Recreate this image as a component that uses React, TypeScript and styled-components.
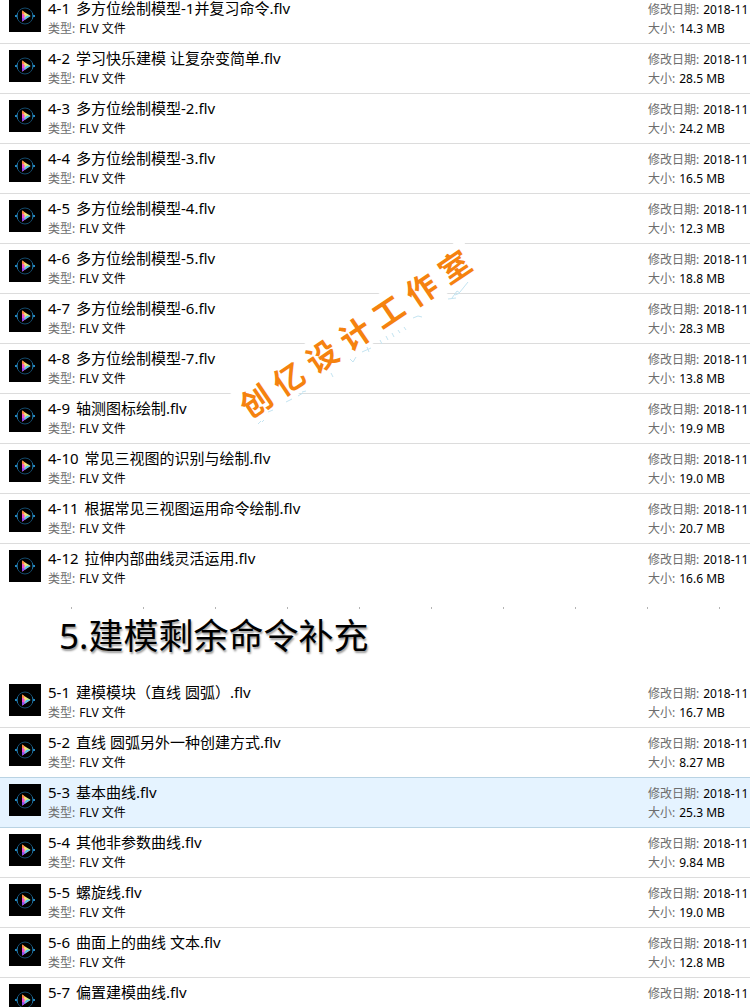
import React from "react";
import styled, { createGlobalStyle } from "styled-components";

const GlobalStyle = createGlobalStyle`
  * { box-sizing: border-box; }
  body {
    margin: 0;
    background: #ffffff;
    color: #000000;
    font-family: "Noto Sans", "Noto Sans CJK SC", sans-serif;
  }
`;

const Page = styled.main`
  position: relative;
  height: 100vh;
  overflow: hidden;
`;

const FileList = styled.ul<{ $scrolled?: boolean }>`
  margin: ${(p) => (p.$scrolled ? "-6px" : "0")} 0 0;
  padding: 0;
  list-style: none;
`;

const FileRow = styled.li<{ $selected?: boolean }>`
  display: flex;
  height: 50px;
  padding: 6px 0 0 9px;
  border-bottom: 1px solid ${(p) => (p.$selected ? "#b9d3e3" : "#dcdcdc")};
  background: ${(p) => (p.$selected ? "#e5f3ff" : "transparent")};
  box-shadow: ${(p) => (p.$selected ? "0 -1px 0 #b9d3e3" : "none")};

  ${FileList}[data-open-end] > &:last-child {
    border-bottom-color: transparent;
  }
`;

const Thumb = styled.svg`
  flex: none;
  width: 32px;
  height: 32px;
  background: #000000;
`;

const Main = styled.div`
  flex: 1;
  min-width: 0;
  padding-left: 7px;
  white-space: nowrap;
`;

const FileName = styled.div`
  display: flex;
  gap: 6px;
  height: 20px;
  font-size: 15px;
  line-height: 16px;
`;

const Meta = styled.div`
  display: flex;
  gap: 4px;
  height: 19px;
  font-size: 12px;
  line-height: 18px;
  white-space: nowrap;
`;

const Label = styled.span`
  color: #6d6d6d;
`;

const Details = styled.div`
  flex: none;
  width: 102px;
  padding-top: 1px;
`;

const SectionHead = styled.header`
  height: 84px;
  padding-top: 13px;
`;

const Ticks = styled.div`
  display: flex;
  gap: 71px;
  padding-left: 71px;
  overflow: hidden;
`;

const Tick = styled.i`
  flex: none;
  width: 1px;
  height: 2px;
  background: #b4b4b4;
`;

const SectionTitle = styled.h2`
  margin: 0;
  padding: 2px 0 0 59px;
  font-size: 35px;
  font-weight: 400;
  line-height: 50px;
  white-space: nowrap;
  text-shadow: 1px 2px 2px rgba(0, 0, 0, 0.4);
`;

const Watermark = styled.div`
  position: absolute;
  left: 214px;
  top: 238px;
  width: 280px;
  height: 190px;
  display: flex;
  align-items: center;
  justify-content: center;
  pointer-events: none;
`;

const WatermarkText = styled.div`
  position: relative;
  flex: none;
  display: flex;
  gap: 9px;
  padding: 0 6px;
  background: #ffffff;
  color: #f5820f;
  font-family: "Noto Sans CJK SC", sans-serif;
  font-size: 31px;
  font-weight: 700;
  line-height: 38px;
  transform: rotate(-34deg);
`;

const Reflection = styled.svg`
  position: absolute;
  left: 6px;
  top: 2px;
  width: 280px;
  height: 190px;
`;

type Item = { no: string; name: string; size?: string; selected?: boolean };

const modelling: Item[] = [
  { no: "4-1", name: "多方位绘制模型-1并复习命令.flv", size: "14.3 MB" },
  { no: "4-2", name: "学习快乐建模 让复杂变简单.flv", size: "28.5 MB" },
  { no: "4-3", name: "多方位绘制模型-2.flv", size: "24.2 MB" },
  { no: "4-4", name: "多方位绘制模型-3.flv", size: "16.5 MB" },
  { no: "4-5", name: "多方位绘制模型-4.flv", size: "12.3 MB" },
  { no: "4-6", name: "多方位绘制模型-5.flv", size: "18.8 MB" },
  { no: "4-7", name: "多方位绘制模型-6.flv", size: "28.3 MB" },
  { no: "4-8", name: "多方位绘制模型-7.flv", size: "13.8 MB" },
  { no: "4-9", name: "轴测图标绘制.flv", size: "19.9 MB" },
  { no: "4-10", name: "常见三视图的识别与绘制.flv", size: "19.0 MB" },
  { no: "4-11", name: "根据常见三视图运用命令绘制.flv", size: "20.7 MB" },
  { no: "4-12", name: "拉伸内部曲线灵活运用.flv", size: "16.6 MB" },
];

const commands: Item[] = [
  { no: "5-1", name: "建模模块（直线 圆弧）.flv", size: "16.7 MB" },
  { no: "5-2", name: "直线 圆弧另外一种创建方式.flv", size: "8.27 MB" },
  { no: "5-3", name: "基本曲线.flv", size: "25.3 MB", selected: true },
  { no: "5-4", name: "其他非参数曲线.flv", size: "9.84 MB" },
  { no: "5-5", name: "螺旋线.flv", size: "19.0 MB" },
  { no: "5-6", name: "曲面上的曲线 文本.flv", size: "12.8 MB" },
  { no: "5-7", name: "偏置建模曲线.flv" },
];

function PlayerIcon() {
  return (
    <Thumb viewBox="0 0 32 32" aria-hidden="true">
      <circle cx="16" cy="16" r="8" fill="none" stroke="#14496a" strokeWidth="1" />
      <path d="M8.6 13a8 8 0 0 0 0 6M23.4 13a8 8 0 0 1 0 6" fill="none" stroke="#1c6f9f" strokeWidth="1" />
      <path d="M6 15h2v2H6zM24 15h2v2h-2z" fill="#2487bd" />
      <path d="M13 10.5v11L21.5 16z" fill="#f4e27a" />
      <path d="M13 10.5v5.5l3-3.6z" fill="#ff8a3c" />
      <path d="M13 13.5v8l2.6-1.7V15z" fill="#ee4fd0" />
      <path d="M13 18v3.5l4-2.6z" fill="#8a4cf5" />
      <path d="M15.6 19.8L21.5 16h-4.2l-1.7 1.6z" fill="#5cc4f0" />
      <path d="M17 16h4.5L19 14.4z" fill="#a8ec9a" />
    </Thumb>
  );
}

function Field({ label, value }: { label: string; value: string }) {
  return (
    <Meta>
      <Label>{label}:</Label>
      <span>{value}</span>
    </Meta>
  );
}

function Files({ items, scrolled, openEnd }: { items: Item[]; scrolled?: boolean; openEnd?: boolean }) {
  return (
    <FileList $scrolled={scrolled} data-open-end={openEnd || undefined}>
      {items.map((item) => (
        <FileRow key={item.no} $selected={item.selected}>
          <PlayerIcon />
          <Main>
            <FileName>
              <span>{item.no}</span>
              <span>{item.name}</span>
            </FileName>
            {item.size && <Field label="类型" value="FLV 文件" />}
          </Main>
          <Details>
            <Field label="修改日期" value="2018-11" />
            {item.size && <Field label="大小" value={item.size} />}
          </Details>
        </FileRow>
      ))}
    </FileList>
  );
}

export default function App() {
  return (
    <>
      <GlobalStyle />
      <Page>
        <Files items={modelling} scrolled openEnd />
        <SectionHead>
          <Ticks aria-hidden="true">
            {Array.from({ length: 10 }, (_, i) => (
              <Tick key={i} />
            ))}
          </Ticks>
          <SectionTitle>5.建模剩余命令补充</SectionTitle>
        </SectionHead>
        <Files items={commands} />
        <Watermark>
          <WatermarkText>
            {Array.from("创亿设计工作室").map((char) => (
              <span key={char}>{char}</span>
            ))}
          </WatermarkText>
          <Reflection viewBox="0 0 280 190" fill="none" stroke="#c4e4f1" strokeWidth="1" aria-hidden="true">
            <path d="M232 58l5-7 3 2-5 2M240 52l8-10M228 59l8-1M193 78l5-2 4 1M160 100l2 4M166 96l2 4M172 93l2 4M178 90l2 3M184 87l2 3" />
            <path d="M142 112l9-4M147 107l2 5M130 119l3 3 3-5M111 133l2 4M78 156l5-3M82 152l4-1M66 162l6-3M48 172l5-2M38 184l3-3M42 182l2-2" />
          </Reflection>
        </Watermark>
      </Page>
    </>
  );
}
